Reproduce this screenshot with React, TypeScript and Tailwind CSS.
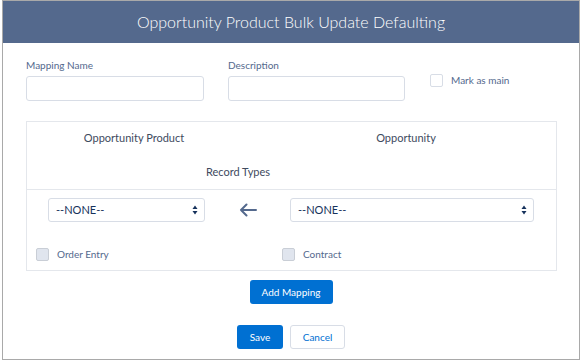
import React from "react";

function Check({ className = "" }: { className?: string }) {
  return <span className={`block h-[13px] w-[13px] rounded-[2px] border ${className}`} />;
}

function SelectBox({ width }: { width: string }) {
  return (
    <div className={`flex h-[24px] ${width} items-center justify-between rounded-[3px] border border-[#d8dde6] bg-white pl-[7px] pr-[6px] text-[11px] text-[#16325c]`}>
      <span>--NONE--</span>
      <svg width="6" height="10" viewBox="0 0 6 10">
        <path d="M3 0.5 L5.5 4 L0.5 4 Z" fill="#16325c" />
        <path d="M3 9.5 L5.5 6 L0.5 6 Z" fill="#16325c" />
      </svg>
    </div>
  );
}

export default function App() {
  return (
    <div className="h-[364px] w-[582px] bg-white" style={{ fontFamily: "Lato, 'Open Sans', sans-serif" }}>
      <div className="ml-[2px] h-[360px] w-[578px] border border-[#a9a9a9] bg-white">
        {/* header */}
        <div className="flex h-[42px] items-center justify-center bg-[#54698d] text-[16px] font-light text-white">
          Opportunity Product Bulk Update Defaulting
        </div>

        <div className="pl-[23px] pt-[16px]">
          {/* top fields */}
          <div className="flex items-start">
            <div className="w-[202px]">
              <label className="mb-[4px] block text-[10px] leading-[13px] text-[#54698d]">Mapping Name</label>
              <input className="h-[25px] w-[178px] rounded-[3px] border border-[#d8dde6] outline-none" />
            </div>
            <div className="w-[202px]">
              <label className="mb-[4px] block text-[10px] leading-[13px] text-[#54698d]">Description</label>
              <input className="h-[25px] w-[177px] rounded-[3px] border border-[#d8dde6] outline-none" />
            </div>
            <div className="flex items-center gap-[8px] pt-[14px] text-[10px] text-[#54698d]">
              <Check className="border-[#d8dde6] bg-white" />
              Mark as main
            </div>
          </div>

          {/* mapping box */}
          <div className="mt-[20px] h-[150px] w-[531px] border border-[#e4e7ec]">
            <div className="flex pt-[8px] text-[11px] text-[#3e4a5e]">
              <div className="w-[214px] shrink-0 text-center">Opportunity Product</div>
              <div className="w-[315px] shrink-0 pl-[15px] text-center">Opportunity</div>
            </div>
            <div className="pt-[17px] text-[11px] text-[#3e4a5e]">
              <div className="w-[422px] text-center">Record Types</div>
            </div>
            <div className="mt-[9px] border-t border-[#e4e7ec]" />
            <div className="flex items-center pt-[8px] pl-[21px]">
              <SelectBox width="w-[157px]" />
              <div className="flex w-[85px] justify-center">
                <svg width="18" height="14" viewBox="0 0 18 14">
                  <path d="M17 7 H2 M7.5 1.5 L2 7 L7.5 12.5" stroke="#54698d" strokeWidth="2" fill="none" strokeLinecap="round" strokeLinejoin="round" />
                </svg>
              </div>
              <SelectBox width="w-[244px]" />
            </div>
            <div className="flex items-center pl-[9px] pt-[25px] text-[10px] text-[#54698d]">
              <div className="flex w-[246px] items-center gap-[8px]">
                <Check className="border-[#c9ced6] bg-[#e0e5ee]" />
                Order Entry
              </div>
              <div className="flex items-center gap-[8px]">
                <Check className="border-[#c9ced6] bg-[#e0e5ee]" />
                Contract
              </div>
            </div>
          </div>
        </div>

        {/* actions */}
        <div className="mt-[9px] flex justify-center">
          <button className="h-[24px] w-[83px] rounded-[3px] bg-[#0070d2] text-[10px] text-white">Add Mapping</button>
        </div>
        <div className="mt-[21px] flex justify-center gap-[7px]">
          <button className="h-[24px] w-[46px] rounded-[3px] bg-[#0070d2] text-[10px] text-white">Save</button>
          <button className="h-[24px] w-[55px] rounded-[3px] border border-[#d8dde6] bg-white text-[10px] text-[#0070d2]">Cancel</button>
        </div>
      </div>
    </div>
  );
}
